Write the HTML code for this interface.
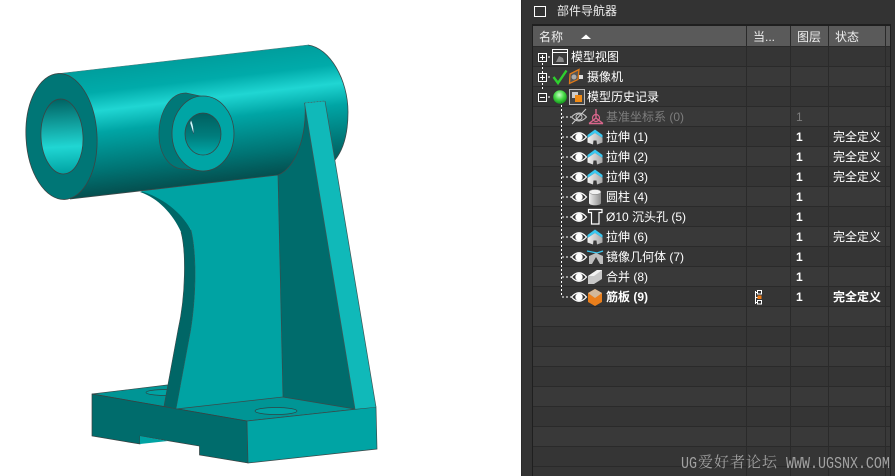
<!DOCTYPE html>
<html><head><meta charset="utf-8"><style>
html,body{margin:0;padding:0;background:#fff;width:895px;height:476px;overflow:hidden}
svg{display:block}
text{font-family:"Liberation Sans","Noto Sans CJK SC",sans-serif;font-size:12px;fill:#fff}
.b{font-weight:700}
.g{fill:#7d7d7d}
.h{fill:#eee}
.w{font-family:"Liberation Mono",serif;font-size:17px;fill:#a2a2a2}
.wc{font-family:"Noto Serif CJK SC",serif;font-size:15px;letter-spacing:1px;fill:#a2a2a2}
</style></head><body>
<svg width="895" height="476" viewBox="0 0 895 476" xmlns="http://www.w3.org/2000/svg">
<defs>
<linearGradient id="cyl" gradientUnits="userSpaceOnUse" x1="55" y1="74" x2="69.4" y2="199">
<stop offset="0" stop-color="#009e9d"/><stop offset=".18" stop-color="#00abaa"/><stop offset=".33" stop-color="#20d6d3"/><stop offset=".5" stop-color="#00a5a5"/><stop offset=".8" stop-color="#007474"/><stop offset="1" stop-color="#044f4f"/>
</linearGradient>
<linearGradient id="hole" x1="0" y1="0" x2="0" y2="1">
<stop offset="0" stop-color="#006363"/><stop offset=".64" stop-color="#20d6d3"/><stop offset="1" stop-color="#00a2a2"/>
</linearGradient>
<linearGradient id="hole2" x1="0" y1="0" x2="0" y2="1">
<stop offset="0" stop-color="#005f5f"/><stop offset=".55" stop-color="#007d7d"/><stop offset="1" stop-color="#00a8a8"/>
</linearGradient>
<radialGradient id="ball" cx=".45" cy=".35" r=".7"><stop offset="0" stop-color="#c8ffc8"/><stop offset=".5" stop-color="#45d845"/><stop offset="1" stop-color="#0a8a14"/></radialGradient>
<linearGradient id="cy" x1="0" y1="0" x2="1" y2="0"><stop offset="0" stop-color="#eee"/><stop offset="1" stop-color="#8e8e8e"/></linearGradient>
<linearGradient id="gb" x1="0" y1="0" x2="1" y2="0"><stop offset="0" stop-color="#f0f0f0"/><stop offset="1" stop-color="#a8a8a8"/></linearGradient>
<g id="eye"><path d="M-7.500 0Q0-8.500 7.500 0Q0 8.500-7.500 0Z" fill="#333" stroke="#fff" stroke-width="1.300"/><circle r="3.700" fill="#fff"/></g>
<g id="ext"><path d="M-7.500 -2L0 -7.500L7.500 -2L7.500 1L0 -4L-7.500 1Z" fill="#3cc8f0"/><path d="M-7.500 1L-7.500 5.500L-2 7.500L-1.500 3.500L1.500 3.500L2 7.500L7.500 5.500L7.500 1L0 -4Z" fill="url(#gb)"/></g>
</defs>
<rect width="895" height="476" fill="#fff"/>

<!-- MODEL -->
<path d="M92 394L167 385L283 397L376 407L247 421Z" fill="#009595" stroke="#3a4a4a" stroke-width=".7"/>
<ellipse cx="166" cy="392.500" rx="20" ry="3" fill="#00a3a3" stroke="#2d4444" stroke-width=".7"/>
<path d="M92 394L247 421L248 463L199.500 455L199.500 446L140 436L140 444L92 436Z" fill="#006c6c" stroke="#3a4040" stroke-width=".7"/>
<path d="M140 436L168 441L140 444Z" fill="#00a3a3"/>
<path d="M247 421L376 407L377 449L248 463Z" fill="#00a4a4" stroke="#3a4a4a" stroke-width=".7"/>
<ellipse cx="276" cy="411" rx="21" ry="3.500" fill="#00a3a3" stroke="#2d4444" stroke-width=".7"/>
<!-- cylinder cap -->
<path d="M308 45C330 48 348 80 348 112C348 135 343 150 335 160L300 175L270 60Z" fill="url(#cyl)"/>
<path d="M308 45C330 48 348 80 348 112C348 135 343 150 335 160" fill="none" stroke="#3c4a4a" stroke-width=".8"/>
<!-- dark wall -->
<path d="M305 103C307 135 296 168 278 175L283 397L355 409Z" fill="#006c6c"/>
<path d="M283 397L355 409" stroke="#3a4a4a" stroke-width=".7" fill="none"/>
<!-- web side -->
<path d="M140 192C158 198 173 214 181 232C186 250 186 295 178 330L164 406L176 409L190.700 330C197 290 196 250 191 230C183 214 165 198 150 190Z" fill="#006666"/>
<!-- web front -->
<path d="M140 191L278 175L283 397L176 409L190.700 330C197 290 196 250 191 230C181 212 162 197 140 191Z" fill="#00a3a3"/>
<path d="M278 175L283 397L176 409" fill="none" stroke="#3a4a4a" stroke-width=".7"/>
<path d="M176 409L190.700 330C197 290 196 250 191 230" fill="none" stroke="#2f5555" stroke-width=".5"/>
<path d="M181 232C186 250 186 295 178 330L164 406L176 409" fill="none" stroke="#3a4a4a" stroke-width=".6"/>
<!-- cylinder body -->
<path d="M55 74L308 45L320 60L305 103C307 135 296 168 278 175L70 199Z" fill="url(#cyl)"/>
<path d="M305 103C307 135 296 168 278 175L70 199" fill="none" stroke="#3c4a4a" stroke-width=".8"/>
<path d="M55 74L308 45" fill="none" stroke="#4a7a7a" stroke-width=".6"/>
<!-- rib -->
<path d="M304.500 103L325 101L376 407L355 409Z" fill="#10b9b9"/>
<path d="M304.500 103L325 101" fill="none" stroke="#4f6060" stroke-width=".7" stroke-dasharray="2 1"/>
<path d="M304.500 103L355 409M325 101L376 407" fill="none" stroke="#3f5555" stroke-width=".7"/>
<!-- end face -->
<ellipse cx="61.500" cy="136.500" rx="35.500" ry="63" transform="rotate(-3 61.500 136.500)" fill="#007676" stroke="#3c4444" stroke-width=".8"/>
<ellipse cx="62" cy="136.500" rx="21" ry="37.500" transform="rotate(-3 62 136.500)" fill="url(#hole)" stroke="#3c4444" stroke-width=".8"/>
<!-- boss -->
<path d="M186 93C170 93 159 112 159 134C159 155 170 169 184 169L205 171L205 97Z" fill="#007878" stroke="#3c4a4a" stroke-width=".7"/>
<ellipse cx="203" cy="133.500" rx="31" ry="37.500" fill="#00a5a5" stroke="#3c4444" stroke-width=".8"/>
<ellipse cx="203" cy="134" rx="18" ry="21" fill="url(#hole2)" stroke="#3c4444" stroke-width=".8"/>
<path d="M191 120C193 124 194 129 193.500 134L190 123Z" fill="#cff" stroke="#245" stroke-width=".4"/>

<!-- PANEL -->
<rect x="521" y="0" width="374" height="476" fill="#333"/>
<rect x="521" y="0" width="1" height="476" fill="#2a2a2a"/>
<rect x="534.500" y="6.500" width="11" height="10" fill="none" stroke="#fff" stroke-width="1"/>
<text x="557" y="15" class="h">部件导航器</text>
<rect x="532" y="24" width="359" height="452" fill="#1f1f1f"/>
<rect x="533" y="26" width="357" height="20" fill="#5a5a5a"/>
<rect x="533" y="47" width="357" height="429" fill="#353535"/>
<g fill="#393939"><rect x="533" y="67" width="357" height="19"/><rect x="533" y="107" width="357" height="19"/><rect x="533" y="147" width="357" height="19"/><rect x="533" y="187" width="357" height="19"/><rect x="533" y="227" width="357" height="19"/><rect x="533" y="267" width="357" height="19"/><rect x="533" y="307" width="357" height="19"/><rect x="533" y="347" width="357" height="19"/><rect x="533" y="387" width="357" height="19"/><rect x="533" y="427" width="357" height="19"/></g>
<g fill="#2a2a2a"><rect x="533" y="46" width="357" height="1"/><rect x="533" y="66" width="357" height="1"/><rect x="533" y="86" width="357" height="1"/><rect x="533" y="106" width="357" height="1"/><rect x="533" y="126" width="357" height="1"/><rect x="533" y="146" width="357" height="1"/><rect x="533" y="166" width="357" height="1"/><rect x="533" y="186" width="357" height="1"/><rect x="533" y="206" width="357" height="1"/><rect x="533" y="226" width="357" height="1"/><rect x="533" y="246" width="357" height="1"/><rect x="533" y="266" width="357" height="1"/><rect x="533" y="286" width="357" height="1"/><rect x="533" y="306" width="357" height="1"/><rect x="533" y="326" width="357" height="1"/><rect x="533" y="346" width="357" height="1"/><rect x="533" y="366" width="357" height="1"/><rect x="533" y="386" width="357" height="1"/><rect x="533" y="406" width="357" height="1"/><rect x="533" y="426" width="357" height="1"/><rect x="533" y="446" width="357" height="1"/><rect x="533" y="466" width="357" height="1"/></g>
<g fill="#2a2a2a"><rect x="746" y="26" width="1" height="450"/><rect x="790" y="26" width="1" height="450"/><rect x="828" y="26" width="1" height="450"/><rect x="885" y="26" width="1" height="450"/></g>
<!-- header -->
<text x="539" y="41" class="h">名称</text>
<path d="M581 39L586 34.500L591 39Z" fill="#fff"/>
<text x="753" y="41" class="h">当...</text>
<text x="797" y="41" class="h">图层</text>
<text x="835" y="41" class="h">状态</text>

<!-- tree lines -->
<path d="M542.500 63V91M548 57H552M548 77H552M548 97H552M561.500 105V297M562 117H571M562 137H571M562 157H571M562 177H571M562 197H571M562 217H571M562 237H571M562 257H571M562 277H571M562 297H571" fill="none" stroke="#fff" stroke-width="1" stroke-dasharray="2 2"/>
<g fill="#333" stroke="#fff"><rect x="538.500" y="53.500" width="8" height="8"/><rect x="538.500" y="73.500" width="8" height="8"/><rect x="538.500" y="93.500" width="8" height="8"/></g>
<path d="M540 57.500H545M542.500 55V60M540 77.500H545M542.500 75V80M540 97.500H545" stroke="#fff" fill="none"/>
<!-- top-level icons -->
<rect x="552.500" y="49.500" width="15" height="15" fill="#3a3a3a" stroke="#fff"/>
<path d="M553 52.500H567" stroke="#fff"/>
<path d="M556 62L559 56L563 58L564 62Z" fill="#8a8a8a"/>
<path d="M553.500 77L558 83L566.500 70.500" fill="none" stroke="#2ed02e" stroke-width="2.400"/>
<path d="M570 74L579 69.500L578 79.500L569.500 83.500Z" fill="#555" stroke="#e07a18" stroke-width="1.300"/>
<circle cx="574" cy="77" r="2.500" fill="#aaa"/>
<rect x="579" y="75" width="4" height="4" fill="#ddd"/>
<circle cx="560" cy="97" r="6.800" fill="url(#ball)"/>
<rect x="569.500" y="89.500" width="15" height="15" fill="#444" stroke="#bbb"/>
<rect x="572" y="92" width="6" height="6" fill="#ccc"/>
<rect x="575" y="95" width="7" height="7" fill="#f08a14"/>
<text x="571" y="61">模型视图</text>
<text x="587" y="81">摄像机</text>
<text x="587" y="101">模型历史记录</text>

<!-- row 0 -->
<g transform="translate(579,117)"><path d="M-7.500 0Q0-8 7.500 0Q0 8-7.500 0Z" fill="none" stroke="#c8c8c8"/><circle r="3" fill="none" stroke="#c8c8c8"/><path d="M-7 7L7-8" stroke="#c8c8c8"/></g>
<path d="M596 109V118M596 118L589 123.500M596 118L603 123.500M589 123.500H603" fill="none" stroke="#d9668c" stroke-width="1.400"/>
<circle cx="596" cy="118" r="3.500" fill="none" stroke="#d9668c" stroke-width="1.200"/>
<text x="606" y="121" class="g">基准坐标系 (0)</text>
<text x="796" y="121" class="g">1</text>

<use href="#eye" x="579" y="137"/><use href="#ext" x="595" y="137"/>
<text x="606" y="141">拉伸 (1)</text>
<use href="#eye" x="579" y="157"/><use href="#ext" x="595" y="157"/>
<text x="606" y="161">拉伸 (2)</text>
<use href="#eye" x="579" y="177"/><use href="#ext" x="595" y="177"/>
<text x="606" y="181">拉伸 (3)</text>
<use href="#eye" x="579" y="197"/>
<path d="M589 192V203C589 206 601 206 601 203V192Z" fill="url(#cy)"/><ellipse cx="595" cy="192" rx="6" ry="2.500" fill="#f0f0f0" stroke="#777" stroke-width=".5"/>
<text x="606" y="201">圆柱 (4)</text>
<use href="#eye" x="579" y="217"/>
<path d="M588.500 209.500H602V212.500H599V224H591.500V212.500H588.500Z" fill="none" stroke="#fff" stroke-width="1.200"/>
<text x="606" y="221">Ø10 沉头孔 (5)</text>
<use href="#eye" x="579" y="237"/><use href="#ext" x="595" y="237"/>
<text x="606" y="241">拉伸 (6)</text>
<use href="#eye" x="579" y="257"/>
<path d="M587 251L597 253L603 251" fill="none" stroke="#3cc8f0" stroke-width="1.300"/>
<path d="M589 256L596 253L603 256V264H600L596 257L592 264H589Z" fill="#bdbdbd"/>
<text x="606" y="261">镜像几何体 (7)</text>
<use href="#eye" x="579" y="277"/>
<path d="M588 276L597 270H602V279L594 284H588Z" fill="#c8c8c8"/><path d="M588 276L597 270H602L594 276Z" fill="#f2f2f2"/>
<text x="606" y="281">合并 (8)</text>
<use href="#eye" x="579" y="297"/>
<path d="M595 289L602 293V302L595 306L588 302V293Z" fill="#ea7f1c"/><path d="M595 289L602 293L595 298L588 293Z" fill="#d2b89a"/>
<text x="606" y="301" class="b">筋板 (9)</text>

<!-- layer column -->
<text x="796" y="141" class="b">1</text><text x="796" y="161" class="b">1</text><text x="796" y="181" class="b">1</text><text x="796" y="201" class="b">1</text><text x="796" y="221" class="b">1</text><text x="796" y="241" class="b">1</text><text x="796" y="261" class="b">1</text><text x="796" y="281" class="b">1</text><text x="796" y="301" class="b">1</text>
<!-- status -->
<text x="833" y="141">完全定义</text>
<text x="833" y="161">完全定义</text>
<text x="833" y="181">完全定义</text>
<text x="833" y="241">完全定义</text>
<text x="833" y="301" class="b">完全定义</text>
<!-- current marker -->
<path d="M755.500 291V304M755.500 292.500H758M755.500 297.500H758M755.500 302.500H758" fill="none" stroke="#fff"/>
<rect x="757.500" y="290.500" width="4" height="3.500" fill="#333" stroke="#fff"/>
<rect x="757.500" y="295.500" width="4" height="3.500" fill="#f07a14"/>
<rect x="757.500" y="300.500" width="4" height="3.500" fill="#333" stroke="#fff"/>

<!-- watermark -->
<text class="w" transform="translate(681,468) scale(.784,1)">UG</text>
<text x="698" y="467" class="wc">爱好者论坛</text>
<text class="w" transform="translate(786,468) scale(.784,1)">WWW.UGSNX.COM</text>
</svg>
</body></html>
